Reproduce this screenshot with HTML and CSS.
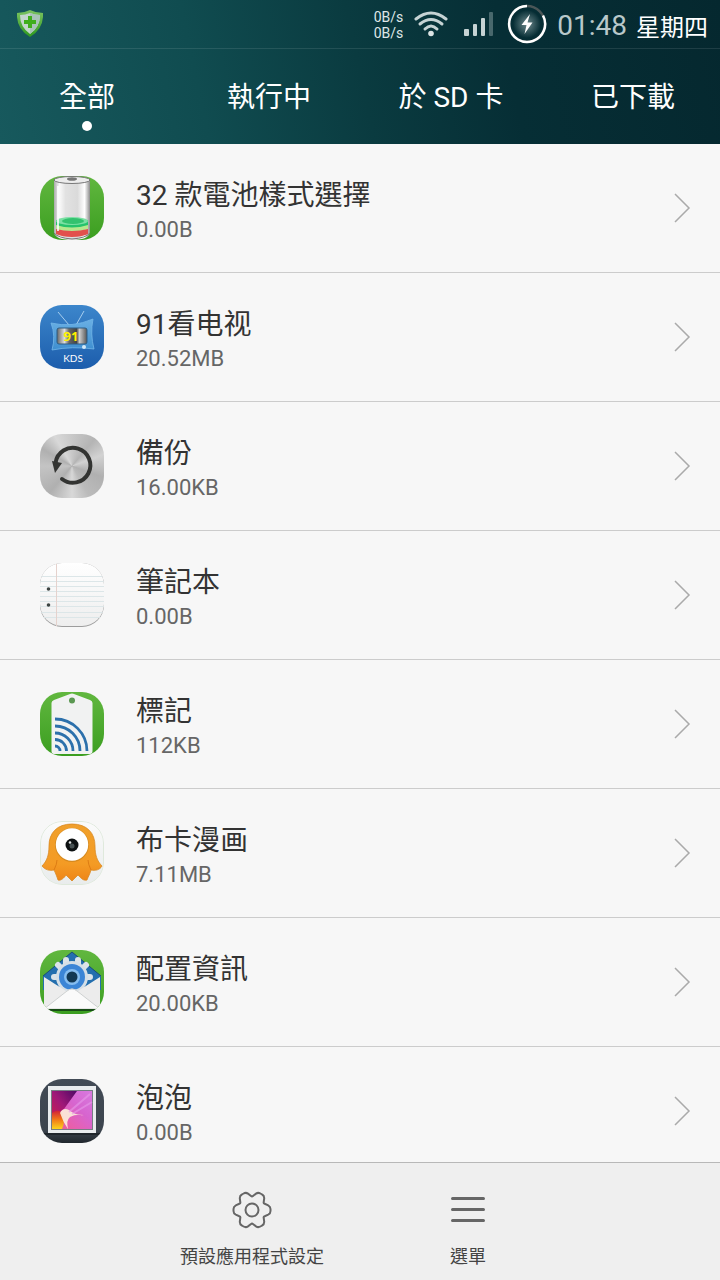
FILE: index.html
```html
<!DOCTYPE html>
<html lang="zh-Hant">
<head>
  <meta charset="UTF-8" />
  <meta name="viewport" content="width=device-width, initial-scale=1.0" />
  <title>應用程式</title>
  <link rel="stylesheet" href="styles.css">
</head>
<body>

  <header class="header">
    <div class="status-bar">
      <svg class="shield" viewBox="0 0 26 28" aria-hidden="true">
        <defs>
          <linearGradient id="shield-edge" x2="0" y2="1"><stop stop-color="#7cc462" /><stop offset="1" stop-color="#2f9a1d" /></linearGradient>
        </defs>
        <path d="M13 0 Q19 3 26 3 Q27 19 13 27 Q-1 19 0 3 Q7 3 13 0Z" fill="url(#shield-edge)" />
        <path d="M13 3 Q18 5 23 5 Q23 17 13 24 Q3 17 3 5 Q8 5 13 3Z" fill="#c3d6cc" />
        <path d="M13 3 Q18 5 23 5 Q23 17 13 24Z" fill="#a9c4b8" />
        <path d="M11 6h4v4h4v4h-4v4h-4v-4H7v-4h4z" fill="#3fae1c" />
      </svg>
      <div class="net-speed">
        <span>0B/s</span>
        <span>0B/s</span>
      </div>
      <svg class="wifi" viewBox="0 0 34 26" aria-hidden="true">
        <g fill="none" stroke="#c6d3d4" stroke-width="3" stroke-linecap="round">
          <path d="M2 8 Q17 -4 32 8" />
          <path d="M6 13 Q17 4 28 13" />
          <path d="M11 18 Q17 12 23 18" />
        </g>
        <circle cx="17" cy="22.5" r="2.8" fill="#dce4e4" />
      </svg>
      <svg class="signal" viewBox="0 0 30 26" aria-hidden="true">
        <g fill="#c6d3d4">
          <rect x="0" y="18" width="5" height="7" rx="1" />
          <rect x="9" y="13" width="4" height="12" rx="1" />
          <rect x="17" y="7" width="4" height="18" rx="1" />
          <rect x="25" y="1" width="4" height="24" rx="1" opacity="0.35" />
        </g>
      </svg>
      <svg class="battery" viewBox="0 0 40 40" aria-hidden="true">
        <defs>
          <radialGradient id="bolt-glow"><stop stop-color="#9ab0b2" stop-opacity="0.7" /><stop offset="1" stop-color="#9ab0b2" stop-opacity="0" /></radialGradient>
        </defs>
        <circle cx="20" cy="20" r="14" fill="url(#bolt-glow)" />
        <circle cx="20" cy="20" r="18" fill="none" stroke="#4a5657" stroke-width="2.5" />
        <path d="M36 11.5 A18 18 0 1 1 20 2" fill="none" stroke="#fff" stroke-width="2.5" />
        <path d="M23 10 L14.5 21 L19.5 21 L17.5 30 L25.5 18.5 L20.5 18.5Z" fill="#fff" />
      </svg>
      <span class="clock">01:48</span>
      <span class="weekday">星期四</span>
    </div>

    <nav class="tabs">
      <a class="tab active" href="#all">全部</a>
      <a class="tab" href="#running">執行中</a>
      <a class="tab" href="#sd">於 SD 卡</a>
      <a class="tab" href="#downloaded">已下載</a>
    </nav>
  </header>

  <main class="app-list">
    <a class="app" href="#battery">
      <svg class="app-icon" viewBox="0 0 64 64" aria-hidden="true">
        <defs>
          <linearGradient id="green" x2="0" y2="1"><stop stop-color="#61b73f" /><stop offset="1" stop-color="#3b9e20" /></linearGradient>
          <linearGradient id="glass"><stop stop-color="#aaa" /><stop offset="0.15" stop-color="#fafafa" /><stop offset="0.32" stop-color="#e2e2e2" /><stop offset="0.65" stop-color="#dadada" /><stop offset="0.85" stop-color="#fff" /><stop offset="1" stop-color="#8c8c8c" /></linearGradient>
        </defs>
        <rect width="64" height="64" fill="url(#green)" />
        <path d="M14 5 V57 Q16 64 32 64 Q48 64 50 57 V5Z" fill="url(#glass)" />
        <path d="M16 44 V50 Q32 55 48 50 V44Z" fill="#25c36c" />
        <path d="M16 49 Q32 54 48 49 V53 Q32 58 16 53Z" fill="#b5e88d" />
        <path d="M16 53 Q32 57 48 53 V58 Q42 61 32 61 Q22 61 16 58Z" fill="#e2504c" />
        <ellipse cx="32" cy="45" rx="16" ry="4" fill="#7ce0a4" />
        <ellipse cx="33" cy="45" rx="11" ry="3" fill="#33c26f" />
        <ellipse cx="32" cy="4" rx="18" ry="3.5" fill="#ececec" stroke="#777" />
        <ellipse cx="32" cy="3" rx="5" ry="1.8" fill="#777" />
        <path d="M18 10 V55" stroke="#fff" stroke-width="2" opacity="0.8" />
        <path d="M14 57 Q18 62 32 63 Q46 62 50 57" fill="none" stroke="#777" />
      </svg>
      <span class="app-info"><span class="app-name">32 款電池樣式選擇</span><span class="app-size">0.00B</span></span>
      <svg class="arrow" viewBox="0 0 18 30" aria-hidden="true"><path d="M2 1 L16 15 L2 29" /></svg>
    </a>

    <a class="app" href="#tv">
      <svg class="app-icon" viewBox="0 0 64 64" aria-hidden="true">
        <defs>
          <linearGradient id="blue" x2="0" y2="1"><stop stop-color="#3c86cb" /><stop offset="1" stop-color="#1c5dac" /></linearGradient>
          <linearGradient id="tv-frame" x2="0" y2="1"><stop stop-color="#6ab0e4" /><stop offset="1" stop-color="#3f8fd0" /></linearGradient>
          <linearGradient id="tv-screen"><stop stop-color="#666" /><stop offset="0.25" stop-color="#ddd" /><stop offset="0.4" stop-color="#666" /><stop offset="0.65" stop-color="#444" /><stop offset="0.75" stop-color="#ccc" /><stop offset="1" stop-color="#555" /></linearGradient>
        </defs>
        <rect width="64" height="64" fill="url(#blue)" />
        <path d="M18 7 L29 20 M44 6 L36 20" stroke="#a6cdee" stroke-width="1" />
        <path d="M11 18 Q32 23 53 14 Q50 29 54 44 Q32 41 12 45 Q16 31 11 18Z" fill="url(#tv-frame)" stroke="#75b8e8" stroke-width="0.8" />
        <rect x="17" y="23" width="30" height="16" rx="2" fill="url(#tv-screen)" stroke="#2c5d85" />
        <circle cx="44" cy="42" r="2" fill="#d5e9f7" />
        <text class="tv-number" x="31" y="36">91</text>
        <text class="tv-label" x="33" y="57">KDS</text>
      </svg>
      <span class="app-info"><span class="app-name" lang="zh-Hans">91看电视</span><span class="app-size">20.52MB</span></span>
      <svg class="arrow" viewBox="0 0 18 30" aria-hidden="true"><path d="M2 1 L16 15 L2 29" /></svg>
    </a>

    <a class="app" href="#backup">
      <span class="app-icon metal">
        <svg viewBox="0 0 64 64" aria-hidden="true">
          <path d="M22 45 A17.5 17.5 0 1 0 15.500 29" fill="none" stroke="#333432" stroke-width="4" stroke-linecap="round" />
          <path d="M12 27 L22 29 L15 39Z" fill="#333432" />
        </svg>
      </span>
      <span class="app-info"><span class="app-name">備份</span><span class="app-size">16.00KB</span></span>
      <svg class="arrow" viewBox="0 0 18 30" aria-hidden="true"><path d="M2 1 L16 15 L2 29" /></svg>
    </a>

    <a class="app" href="#notes">
      <svg class="app-icon" viewBox="0 0 64 64" aria-hidden="true">
        <defs>
          <linearGradient id="paper" x2="0" y2="1"><stop stop-color="#fff" /><stop offset="1" stop-color="#eee" /></linearGradient>
        </defs>
        <rect width="64" height="64" fill="#9d9d9d" />
        <rect y="-1" width="64" height="64" rx="22" fill="url(#paper)" />
        <path d="M0 13.5H64 M0 18.5H64 M0 23.5H64 M0 28.5H64 M0 33.5H64 M0 38.5H64 M0 43.5H64 M0 49.5H64 M0 54.5H64" stroke="#dce6e8" />
        <path d="M16.5 0V63" stroke="#e5d2cd" />
        <circle cx="8.5" cy="26" r="1.8" fill="#3c4442" />
        <circle cx="8.5" cy="42" r="1.8" fill="#3c4442" />
      </svg>
      <span class="app-info"><span class="app-name">筆記本</span><span class="app-size">0.00B</span></span>
      <svg class="arrow" viewBox="0 0 18 30" aria-hidden="true"><path d="M2 1 L16 15 L2 29" /></svg>
    </a>

    <a class="app" href="#tags">
      <svg class="app-icon" viewBox="0 0 64 64" aria-hidden="true">
        <rect width="64" height="64" fill="url(#green)" />
        <path d="M11.5 11 Q11.5 9 14 8 L30 2 Q32 1 34 2 L50 8 Q52.5 9 52.5 11 V59 Q52.5 62 50 62 H14 Q11.5 62 11.5 59Z" fill="#f1f2f2" />
        <circle cx="32" cy="8.5" r="3" fill="#5b9852" />
        <g fill="none" stroke="#2c70ab" stroke-width="2.8">
          <path d="M15 27 A32 32 0 0 1 47 59" />
          <path d="M15 34 A25 25 0 0 1 40 59" />
          <path d="M15 41 A18 18 0 0 1 33 59" />
          <path d="M15 47.5 A11.5 11.5 0 0 1 26.5 59" />
          <path d="M15 54 A5 5 0 0 1 20 59" />
        </g>
      </svg>
      <span class="app-info"><span class="app-name">標記</span><span class="app-size">112KB</span></span>
      <svg class="arrow" viewBox="0 0 18 30" aria-hidden="true"><path d="M2 1 L16 15 L2 29" /></svg>
    </a>

    <a class="app" href="#comics">
      <svg class="app-icon" viewBox="0 0 64 64" aria-hidden="true">
        <defs>
          <linearGradient id="orange" x2="0" y2="1"><stop stop-color="#f0a02c" /><stop offset="0.7" stop-color="#f49b24" /><stop offset="1" stop-color="#ee8518" /></linearGradient>
          <linearGradient id="comic-bg" x2="0" y2="1"><stop stop-color="#fbfbfb" /><stop offset="1" stop-color="#e9ecec" /></linearGradient>
        </defs>
        <rect x="0.5" y="0.5" width="63" height="63" rx="21.5" fill="url(#comic-bg)" stroke="#dfe9dc" />
        <path d="M32 3 C17 3 9 12 9 25 C9 34 7 40 2 45 C5 49 10 50 14 49 C16 53 17 56 18 59 C21 60 24 57 26 54 L32 60 L38 54 C41 57 43 60 47 59 C48 56 50 53 51 49 C55 50 60 49 62 45 C57 40 55 34 55 25 C55 12 47 3 32 3Z" fill="url(#orange)" stroke="#d98a25" stroke-width="0.8" />
        <path d="M14 49 Q17 43 17 39 M51 49 Q48 43 48 39" fill="none" stroke="#dd7c14" />
        <circle cx="32" cy="24" r="17" fill="#b97a1a" opacity="0.5" />
        <circle cx="32" cy="23.5" r="16.2" fill="#fff" />
        <circle cx="32" cy="24" r="6.5" fill="#0d1112" />
        <circle cx="32" cy="25" r="2.5" fill="#465052" />
        <circle cx="30" cy="21.5" r="1.3" fill="#dfe3e3" />
      </svg>
      <span class="app-info"><span class="app-name">布卡漫画</span><span class="app-size">7.11MB</span></span>
      <svg class="arrow" viewBox="0 0 18 30" aria-hidden="true"><path d="M2 1 L16 15 L2 29" /></svg>
    </a>

    <a class="app" href="#config">
      <svg class="app-icon" viewBox="0 0 64 64" aria-hidden="true">
        <rect width="64" height="64" fill="url(#green)" />
        <path d="M32 2 L61 26 V40 H3 V26Z" fill="#246fae" />
        <path d="M32 2 L61 26 M32 2 L3 26" stroke="#194e76" />
        <path d="M26 10V42 M38 10V42 M18 15L46 43 M46 15L18 43 M14 27H50" stroke="#dbe3e8" stroke-width="6" stroke-linecap="round" />
        <circle cx="32" cy="27" r="16" fill="#d5dfe6" />
        <circle cx="32" cy="27" r="13" fill="#3b85d6" />
        <circle cx="32" cy="27" r="8" fill="#85bdf0" />
        <circle cx="32" cy="27" r="5.5" fill="#123854" />
        <path d="M4 27 L26 41 Q32 36 38 41 L60 27 V60 H4Z" fill="#ececec" />
        <path d="M4 59 L27 41 Q32 37 37 41 L60 59Z" fill="#fafafa" stroke="#c4c8c8" stroke-width="0.8" />
        <rect y="59" width="64" height="2" fill="#184b16" />
      </svg>
      <span class="app-info"><span class="app-name">配置資訊</span><span class="app-size">20.00KB</span></span>
      <svg class="arrow" viewBox="0 0 18 30" aria-hidden="true"><path d="M2 1 L16 15 L2 29" /></svg>
    </a>

    <a class="app" href="#bubble">
      <svg class="app-icon" viewBox="0 0 64 64" aria-hidden="true">
        <defs>
          <linearGradient id="slate" x2="0" y2="1"><stop stop-color="#424b56" /><stop offset="0.8" stop-color="#3c444e" /><stop offset="1" stop-color="#20272d" /></linearGradient>
          <linearGradient id="pink" x1="0" y1="1" x2="1" y2="0"><stop stop-color="#ed5c88" /><stop offset="0.3" stop-color="#e85fae" /><stop offset="0.6" stop-color="#d765cf" /><stop offset="1" stop-color="#d77be0" /></linearGradient>
          <linearGradient id="purple" x1="1" y1="0" x2="0" y2="1"><stop stop-color="#4e0c66" /><stop offset="0.5" stop-color="#a01878" /><stop offset="1" stop-color="#d0204a" /></linearGradient>
          <linearGradient id="flame" x2="0" y2="1"><stop stop-color="#d0203a" /><stop offset="0.5" stop-color="#f27a18" /><stop offset="1" stop-color="#fbd41e" /></linearGradient>
        </defs>
        <rect width="64" height="64" fill="url(#slate)" />
        <rect y="54" width="64" height="2" fill="#20262c" />
        <rect x="8" y="7" width="48" height="47" fill="#e9ecee" />
        <rect x="11.5" y="11.5" width="41" height="39" fill="url(#pink)" stroke="#777d85" />
        <path d="M12 12 H37 L24 30 Q17 34 12 44Z" fill="url(#purple)" />
        <path d="M12 34 Q18 29 22 34 Q26 42 22 50 H12Z" fill="url(#flame)" />
        <path d="M20 34 Q23 28 29 31 Q36 37 44 36 Q35 35 30 38 Q26 41 28 50 Q23 43 20 34Z" fill="#fdf0dc" opacity="0.9" />
        <path d="M29 33 L50 15 M32 35 L52 23" stroke="#e79ae9" stroke-width="2" opacity="0.6" />
      </svg>
      <span class="app-info"><span class="app-name">泡泡</span><span class="app-size">0.00B</span></span>
      <svg class="arrow" viewBox="0 0 18 30" aria-hidden="true"><path d="M2 1 L16 15 L2 29" /></svg>
    </a>
  </main>

  <footer class="toolbar">
    <button class="tool" type="button">
      <svg viewBox="-20 -20 40 40" aria-hidden="true">
        <path d="M16.2 -4.7 Q18.5 -3.5 18.5 -1 V1 Q18.5 3.5 16.2 4.7 L12.7 6.2 Q11.4 6.6 11.7 7.9 L12.2 11.7 Q12.3 14.3 10.1 15.5 L8.4 16.5 Q6.2 17.8 4 16.4 L1 14.1 Q0 13.2 -1 14.1 L-4 16.4 Q-6.2 17.8 -8.4 16.5 L-10.1 15.5 Q-12.3 14.3 -12.2 11.7 L-11.7 7.9 Q-11.4 6.6 -12.7 6.2 L-16.2 4.7 Q-18.5 3.5 -18.5 1 V-1 Q-18.5 -3.5 -16.2 -4.7 L-12.7 -6.2 Q-11.4 -6.6 -11.7 -7.9 L-12.2 -11.7 Q-12.3 -14.3 -10.1 -15.5 L-8.4 -16.5 Q-6.2 -17.8 -4 -16.4 L-1 -14.1 Q0 -13.2 1 -14.1 L4 -16.4 Q6.2 -17.8 8.4 -16.5 L10.1 -15.5 Q12.3 -14.3 12.2 -11.7 L11.7 -7.9 Q11.4 -6.6 12.7 -6.2Z" />
        <circle r="6.5" />
      </svg>
      <span>預設應用程式設定</span>
    </button>
    <button class="tool" type="button">
      <svg class="menu" viewBox="-20 -20 40 40" aria-hidden="true">
        <path d="M-15.5 -11.5H15.5 M-15.5 -0.5H15.5 M-15.5 10.5H15.5" />
      </svg>
      <span>選單</span>
    </button>
  </footer>

</body>
</html>
```
FILE: styles.css
```css
* {
  box-sizing: border-box;
}

body {
  margin: 0;
  height: 100vh;
  display: flex;
  flex-direction: column;
  overflow: hidden;
  background: #f7f7f7;
  color: #333;
  font-family: Roboto, "Noto Sans CJK TC", sans-serif;
}

:lang(zh-Hans) {
  font-family: Roboto, "Noto Sans CJK SC", sans-serif;
}

svg {
  display: block;
}

a {
  color: inherit;
  text-decoration: none;
}

/* header */

.header {
  flex: none;
  overflow: hidden;
  color: #fff;
  background: linear-gradient(78deg, #17595d 0%, #104c50 28%, #0a3b40 50%, #062e35 70%, #05282f 100%);
}

.status-bar {
  display: flex;
  align-items: center;
  height: 48px;
  padding: 0 12px 0 17px;
}

.shield {
  width: 26px;
  height: 28px;
}

.net-speed {
  margin-left: auto;
  display: flex;
  flex-direction: column;
  padding-top: 2px;
  font-size: 14px;
  line-height: 16px;
  color: #dfe7e8;
}

.wifi {
  width: 34px;
  height: 26px;
  margin-left: 11px;
}

.signal {
  width: 30px;
  height: 26px;
  margin-left: 16px;
}

.battery {
  width: 40px;
  height: 40px;
  margin-left: 13px;
}

.clock {
  margin-left: 10px;
  padding-top: 2px;
  font-size: 28px;
  color: #b9c8ca;
}

.weekday {
  margin-left: 9px;
  padding-top: 2px;
  font-size: 24px;
}

.tabs {
  display: grid;
  grid-template-columns: repeat(4, 1fr);
  height: 96px;
  margin: 0 -4px;
  border-top: 1px solid rgba(255, 255, 255, 0.1);
}

.tab {
  display: flex;
  flex-direction: column;
  align-items: center;
  padding-top: 29px;
  font-size: 28px;
  line-height: 40px;
}

.tab.active::after {
  content: "";
  width: 10px;
  height: 10px;
  margin-top: 3px;
  border-radius: 50%;
  background: #fff;
}

/* list */

.app-list {
  flex: 1;
  min-height: 0;
  overflow: hidden;
}

.app {
  display: flex;
  align-items: center;
  height: 129px;
  padding: 0 29px 0 40px;
  border-bottom: 1px solid #ccc;
}

.app-icon {
  flex: none;
  width: 64px;
  height: 64px;
  border-radius: 22px;
  overflow: hidden;
}

.metal {
  background:
    conic-gradient(#c8c8c8, #b4b4b4 40deg, #d2d2d2 70deg, #b0b0b0 110deg, #bbb 150deg, #d8d8d8 180deg, #b0b0b0 220deg, #c4c4c4 270deg, #b0b0b0 300deg, #d8d8d8 330deg, #c8c8c8);
}

.tv-number {
  fill: #fff200;
  font: bold 13px "Open Sans", sans-serif;
  text-anchor: middle;
}

.tv-label {
  fill: #fff;
  font: 10px Lato, sans-serif;
  text-anchor: middle;
}

.app-info {
  flex: 1;
  display: flex;
  flex-direction: column;
  margin-left: 32px;
  padding-top: 7px;
}

.app-name {
  font-size: 28px;
  line-height: 36px;
}

.app-size {
  font-size: 22px;
  line-height: 32px;
  color: #666;
}

.arrow {
  width: 18px;
  height: 30px;
  fill: none;
  stroke: #aaa;
  stroke-width: 1.5;
}

/* bottom toolbar */

.toolbar {
  flex: none;
  display: flex;
  justify-content: center;
  height: 118px;
  border-top: 1px solid #b8b8b8;
  background: #efefef;
}

.tool {
  display: flex;
  flex-direction: column;
  align-items: center;
  width: 30%;
  padding: 27px 0 0;
  border: none;
  background: none;
  color: #444;
  font-family: inherit;
  font-size: 18px;
  line-height: 26px;
  cursor: pointer;
}

.tool svg {
  width: 40px;
  height: 40px;
  margin-bottom: 14px;
  fill: none;
  stroke: #666;
  stroke-width: 2;
}

.tool .menu {
  stroke-width: 3;
  stroke-linecap: round;
}
```
